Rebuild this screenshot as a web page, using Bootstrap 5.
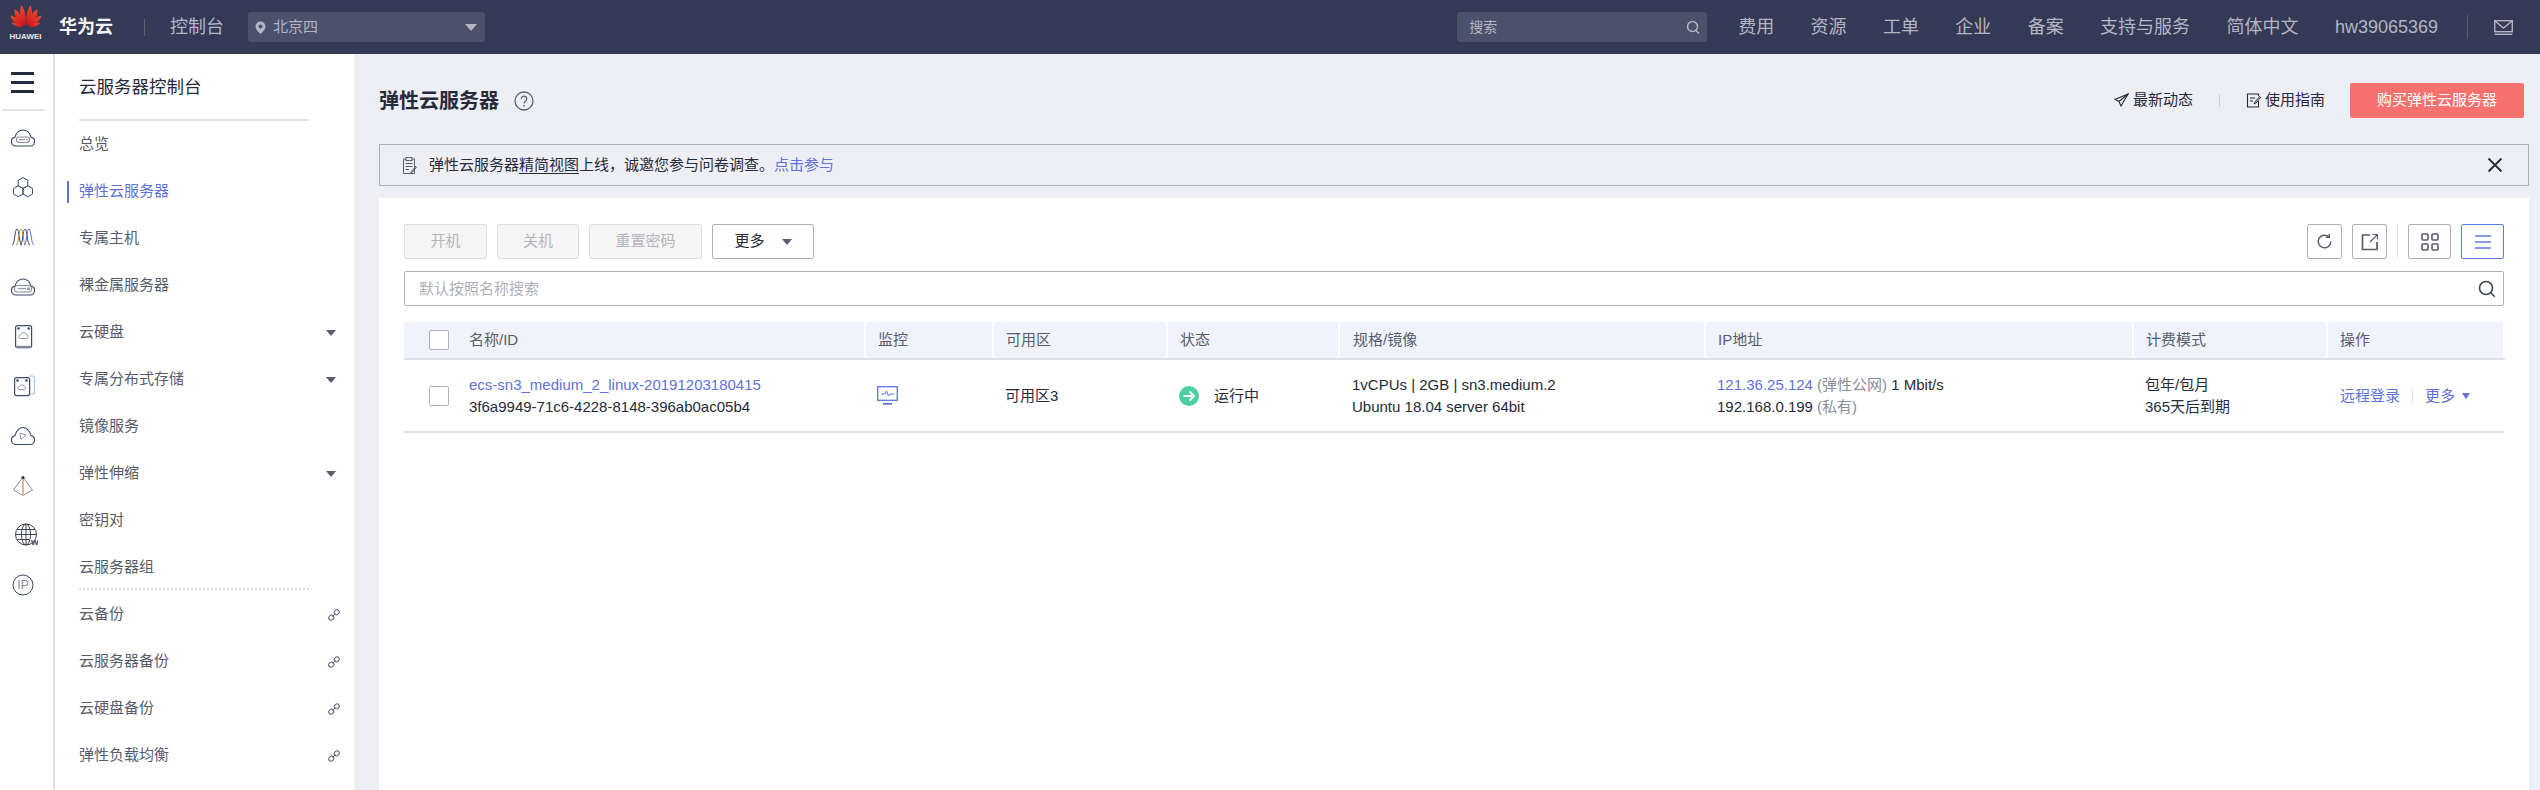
<!DOCTYPE html>
<html lang="zh-CN">
<head>
<meta charset="utf-8">
<title>弹性云服务器</title>
<link href="https://cdn.jsdelivr.net/npm/bootstrap@5.3.0/dist/css/bootstrap.min.css" rel="stylesheet">
<style>
html,body{height:100%;overflow:hidden}
body{font-family:"Liberation Sans","Noto Sans CJK SC",sans-serif;font-size:15px;color:#252b3a;background:#eeeff5}
svg{display:block;flex:none}
a{text-decoration:none}
.hw-top{height:54px;background:#343955;color:#b9bbc7;flex:none}
.hw-logo{width:51px;margin-bottom:9px;flex:none}
.hw-logo-txt{font-size:8px;font-weight:700;line-height:9px;color:#e6e7ec;text-align:center;margin-top:4px}
.hw-brand{font-size:18px;font-weight:700;color:#f4f4f7;margin-left:8px;width:55px}
.hw-vsep{width:1px;height:17px;background:#5d6178}
.hw-vsep-a{margin:0 25px 0 30px}
.hw-console{font-size:18px;width:55px;color:#b4b6c3}
.hw-region{width:237px;height:30px;background:#4b506b;border-radius:3px;margin-left:23px;padding:0 8px 0 7px;color:#b4b6c3}
.hw-region span{margin-left:7px}
.hw-tri{width:0;height:0;border-left:6px solid transparent;border-right:6px solid transparent;border-top:7px solid #b4b6c3}
.hw-search{width:250px;height:30px;background:#4b506b;border-radius:3px;padding:0 7px 0 12px;font-size:14px;color:#b4b6c3;margin-right:31px}
.hw-menu{gap:36.4px;font-size:18px;color:#b4b6c3}
.hw-vsep-b{margin:0 26px 0 29px;background:#555a72;height:24px}
.hw-mail{margin-right:27px}
.hw-wrap{height:736px}
.hw-rail{width:55px;background:#fff;border-right:2px solid #dfe1e6;flex:none}
.hw-burger{height:57px;margin:0 8px 2px 2px;border-bottom:2px solid #e3e4e8;padding:18px 0 0 9px}
.hw-burger i{display:block;width:23px;height:3px;background:#252b3a;margin-bottom:6px}
.hw-railitem{height:49.7px}
.hw-railitem svg{margin-left:10px}
.hw-side{width:299px;background:#fff;flex:none;color:#575d6c}
.hw-side-title{height:67px;margin:0 45px 0 24px;border-bottom:2px solid #e3e4e8;font-size:17.5px;color:#252b3a;line-height:67px}
.hw-side-item{height:47px;padding:0 14px 0 24px;position:relative;color:#575d6c}
.hw-side-item.on{color:#5e72d8}
.hw-side-item.on::before{content:"";position:absolute;left:12px;top:13px;width:2px;height:22px;background:#5e72d8}
.hw-side-item .hw-tri{border-top-color:#575d6c;margin-right:4px;border-left-width:5px;border-right-width:5px;border-top-width:6px}
.hw-dots{margin:-3px 45px 1px 24px;border-top:2px dotted #dfe1e6}
.hw-main{padding:0 11px 0 25px;min-width:0}
.hw-head{height:90px;padding-top:25px}
.hw-h1{font-size:20px;font-weight:700;line-height:44px;margin:0;color:#252b3a}
.hw-help{margin:12px 0 0 15px}
.hw-tool{line-height:42px;font-size:15px;color:#252b3a}
.hw-tool svg{margin-right:4px}
.hw-tool-sep{width:1px;height:13px;background:#c9cfdd;margin:0 26px}
.btn.hw-buy{width:174px;height:35px;margin:0 5px 0 25px;padding:0;background:#f9716e;border:0;border-radius:2px;color:#fff;font-size:15px}
.hw-note{height:42px;border:1px solid #adb0b8;margin-bottom:12px;padding:0 25px 0 22px}
.hw-note span{margin-left:12px}
.hw-note u{text-underline-offset:3px}
.hw-note a,.hw-link{color:#5e72d8}
.hw-panel{background:#fff;padding:26px 25px 0;height:592px}
.hw-bar{height:35px;margin-bottom:12px;gap:10px}
.btn.hw-btn{height:35px;padding:0;font-size:15px;border-radius:2px;border:1px solid #adb0b8;color:#252b3a;background:#fff}
.btn.hw-off,.btn.hw-off:disabled{background:#f5f5f6;border-color:#dfe1e6;color:#b3b5bb;opacity:1}
.hw-w83{width:83px}.hw-w82{width:82px}.hw-w113{width:113px}.hw-w102{width:102px}
.hw-more .hw-tri{border-top-color:#575d6c;border-left-width:5px;border-right-width:5px;border-top-width:6px;margin-left:17px}
.btn.hw-sq{width:35px;display:flex;align-items:center;justify-content:center}
.btn.hw-sq-w{width:43px}
.btn.hw-sq-on{border-color:#5e7ce0}
.hw-bar-sep{width:1px;height:33px;background:#dfe1e6}
.hw-find{height:35px;border:1px solid #adb0b8;border-radius:2px;padding:1px 7px 0 14px;color:#adb0b8;margin-bottom:16px}
.table.hw-table{table-layout:fixed;width:2100px;margin:0;font-size:15px;color:#252b3a}
.hw-table th{height:37px;padding:0 0 0 12px;background:#f0f3fb;border-bottom:2px solid #dfe1e6;border-right:2px solid #fff;font-weight:400;color:#575d6c;vertical-align:middle;--bs-table-bg:#f0f3fb}
.hw-table td{height:73px;padding:0 0 0 12px;border-bottom:2px solid #dfe1e6;vertical-align:middle;line-height:22px;color:#252b3a}
.hw-table .c0{width:55px;padding-left:25px;border-right:0}
.hw-table th.n{width:406px;padding-left:10px}.hw-table td.n{padding-left:10px}
.hw-c-m{width:128px}.hw-c-a{width:174px}.hw-c-s{width:172px}.hw-c-p{width:366px}.hw-c-i{width:428px}.hw-c-b{width:194px}.hw-c-o{width:177px}
.hw-table th.hw-c-p,.hw-table td.hw-c-p,.hw-table td.hw-c-o{padding-left:13px}
.hw-box{display:block;width:20px;height:20px;border:1px solid #adb0b8;border-radius:2px;background:#fff}
.hw-mute{color:#8a8e99}
.hw-state span{margin-left:15px}
.hw-opsep{width:1px;height:14px;background:#dfe1e6;margin:0 12px}
.hw-mini{width:0;height:0;border-left:4px solid transparent;border-right:4px solid transparent;border-top:6px solid #5e72d8;margin-left:7px}
.hw-svgt{font-family:"Liberation Sans",sans-serif}
</style>
</head>
<body>
<header class="hw-top d-flex align-items-center">
  <div class="hw-logo">
    <svg width="32" height="24" viewBox="0 0 34 25" class="mx-auto">
      <defs><linearGradient id="hwg" x1="0" y1="0" x2="0" y2="1"><stop offset="0" stop-color="#f04a2c"/><stop offset="1" stop-color="#c8141c"/></linearGradient></defs>
      <g fill="url(#hwg)">
        <path d="M16 23 C11 17 9 10 12 1 C15 4 18 12 16 23Z"/>
        <path d="M18 23 C23 17 25 10 22 1 C19 4 16 12 18 23Z"/>
        <path d="M15 23 C8 19 4 13 5 5 C9 7 14 14 15 23Z"/>
        <path d="M19 23 C26 19 30 13 29 5 C25 7 20 14 19 23Z"/>
        <path d="M14 23.500 C7 22 2 18 0.500 12 C5 13 11 17 14 23.500Z"/>
        <path d="M20 23.500 C27 22 32 18 33.500 12 C29 13 23 17 20 23.500Z"/>
        <path d="M13.500 24.500 C8 25 4 23 1.500 19.500 C6 19.500 10 21 13.500 24.500Z"/>
        <path d="M20.500 24.500 C26 25 30 23 32.500 19.500 C28 19.500 24 21 20.500 24.500Z"/>
      </g>
    </svg>
    <div class="hw-logo-txt">HUAWEI</div>
  </div>
  <div class="hw-brand">华为云</div>
  <div class="hw-vsep hw-vsep-a"></div>
  <div class="hw-console">控制台</div>
  <div class="hw-region d-flex align-items-center">
    <svg width="11" height="13" viewBox="0 0 11 13"><path fill="#b4b6c3" d="M5.500 0.500a5 5 0 0 1 5 5c0 3-3 5.500-5 7.500-2-2-5-4.500-5-7.500a5 5 0 0 1 5-5z"/><circle cx="5.500" cy="5.500" r="2" fill="#4b506b"/></svg>
    <span>北京四</span>
    <div class="hw-tri ms-auto"></div>
  </div>
  <div class="hw-search d-flex align-items-center justify-content-between ms-auto">
    <span>搜索</span>
    <svg width="14" height="15" viewBox="0 0 14 15" fill="none" stroke="#b4b6c3" stroke-width="1.500"><circle cx="6.500" cy="6.500" r="5"/><path d="M10 10.500l3 3"/></svg>
  </div>
  <div class="hw-menu d-flex align-items-center">
    <span>费用</span><span>资源</span><span>工单</span><span>企业</span><span>备案</span><span>支持与服务</span><span>简体中文</span><span>hw39065369</span>
  </div>
  <div class="hw-vsep hw-vsep-b"></div>
  <svg class="hw-mail" width="19" height="15" viewBox="0 0 19 15" fill="none" stroke="#b4b6c3" stroke-width="1.400"><rect x=".7" y=".7" width="17.600" height="11"/><path d="M1 1l8.500 7L18 1"/><path d="M.7 14.300h17.600"/></svg>
</header>

<div class="hw-wrap d-flex">
  <nav class="hw-rail">
    <div class="hw-burger"><i></i><i></i><i></i></div>
    <div class="hw-railitem d-flex align-items-center"><svg width="26" height="20" viewBox="0 0 26 20" fill="none" stroke="#3c4a6b" stroke-width="1.100"><path d="M6 18a4.500 4.500 0 0 1-1-8.900C6 5 9.300 2 13 2s7 3 8 7.100a4.500 4.500 0 0 1-1 8.900z"/><rect x="6.500" y="9" width="13" height="5.500" rx="2.700" stroke="#8a8e99"/><path d="M9 11.700h6" stroke="#8a8e99"/><circle cx="17" cy="11.700" r=".8" fill="#e0563c" stroke="none"/></svg></div>
    <div class="hw-railitem d-flex align-items-center"><svg width="26" height="21" viewBox="0 0 26 21" fill="none" stroke="#3c4a6b" stroke-width="1"><path d="M13 .5L17.760 3.250V8.750L13 11.500L8.240 8.750V3.250Z"/><path d="M8.240 8.750L13 11.500V17L8.240 19.750L3.480 17V11.500Z"/><path d="M17.760 8.750L22.520 11.500V17L17.760 19.750L13 17V11.500Z"/></svg></div>
    <div class="hw-railitem d-flex align-items-center"><svg width="26" height="20" viewBox="0 0 26 20" fill="none" stroke-width="1"><path stroke="#3c4a6b" d="M2 18C5 18 4.500 2 7 2S9 18 12 18"/><path stroke="#d18a3c" d="M6 18C9 18 8.500 2 11 2S13 18 16 18"/><path stroke="#3c4a6b" d="M10 18C13 18 12.500 2 15 2S17 18 20 18"/><path stroke="#5e72d8" d="M14 18C17 18 16.500 2 19 2S21 18 24 18"/></svg></div>
    <div class="hw-railitem d-flex align-items-center"><svg width="26" height="20" viewBox="0 0 26 20" fill="none" stroke="#3c4a6b" stroke-width="1.100"><path d="M6 18a4.500 4.500 0 0 1-1-8.900C6 5 9.300 2 13 2s7 3 8 7.100a4.500 4.500 0 0 1-1 8.900z"/><rect x="4.500" y="8.500" width="17" height="6.500" rx="3.200" stroke="#8a8e99"/><path d="M8 11.700h8" stroke="#8a8e99"/><circle cx="18.500" cy="11.700" r="1" stroke="#8a8e99"/></svg></div>
    <div class="hw-railitem d-flex align-items-center"><svg width="26" height="24" viewBox="0 0 26 24" fill="none" stroke="#3c4a6b" stroke-width="1.200"><rect x="5.600" y=".6" width="16" height="22" rx="2"/><path d="M10 13.500a2 2 0 0 1 .5-3.800 3.500 3.500 0 0 1 6.500.2 2 2 0 0 1 0 3.600z" stroke="#8a8e99" stroke-width=".9"/><path d="M6 21.800h15.500" stroke="#8a8e99" stroke-width="2"/><circle cx="8.500" cy="3.500" r=".7" fill="#3c4a6b"/><circle cx="18.800" cy="3.500" r=".7" fill="#3c4a6b"/></svg></div>
    <div class="hw-railitem d-flex align-items-center"><svg width="26" height="22" viewBox="0 0 26 22" fill="none" stroke="#3c4a6b" stroke-width="1.200"><path d="M19 1h3.500a2 2 0 0 1 2 2v14a2 2 0 0 1-2 2H20" stroke="#a9c4ea"/><rect x="4.600" y="2.600" width="15" height="18" rx="2"/><path d="M9 14.500a1.500 1.500 0 0 1 .5-3 2.800 2.800 0 0 1 5.200.2 1.500 1.500 0 0 1 0 2.800z" stroke="#8a8e99" stroke-width=".9"/><circle cx="7.500" cy="5.500" r=".7" fill="#3c4a6b"/><circle cx="16.500" cy="5.500" r=".7" fill="#3c4a6b"/></svg></div>
    <div class="hw-railitem d-flex align-items-center"><svg width="26" height="20" viewBox="0 0 26 20" fill="none" stroke="#3c4a6b" stroke-width="1.100"><path d="M6 18.500a4.500 4.500 0 0 1-1-8.900C6 5 9.300 1.500 13 1.500s7 3.500 8 8.100a4.500 4.500 0 0 1-1 8.900z"/><path d="M10 7l6 2-5 4.500z" stroke="#8a8e99" stroke-width=".9"/></svg></div>
    <div class="hw-railitem d-flex align-items-center"><svg width="26" height="22" viewBox="0 0 26 22" fill="none" stroke="#8a8e99" stroke-width="1"><path d="M13 2L3.500 15l9.500 5.500L22.500 15z"/><path d="M13 3v16.500" stroke="#d18a3c" stroke-width="1.200"/><circle cx="13" cy="2.500" r="1.500" fill="#252b3a" stroke="none"/></svg></div>
    <div class="hw-railitem d-flex align-items-center"><svg width="28" height="24" viewBox="0 0 28 24" fill="none" stroke="#3c4151" stroke-width="1"><circle cx="16" cy="11.500" r="10.500"/><ellipse cx="16" cy="11.500" rx="4.500" ry="10.500"/><path d="M16 1v21M5.500 11.500h21M7 6.500h18M7 16.500h12"/><text class="hw-svgt" x="21" y="22" font-size="8" font-weight="700" fill="#3c4151" stroke="none">W</text></svg></div>
    <div class="hw-railitem d-flex align-items-center"><svg width="26" height="22" viewBox="0 0 26 22" fill="none" stroke="#3c4a6b" stroke-width="1"><circle cx="13" cy="11" r="10"/><text class="hw-svgt" x="13" y="15" font-size="12" text-anchor="middle" fill="#8a8e99" stroke="none">IP</text></svg></div>
  </nav>
  <nav class="hw-side">
    <div class="hw-side-title">云服务器控制台</div>
    <div class="hw-side-item d-flex align-items-center justify-content-between">总览</div>
    <div class="hw-side-item on d-flex align-items-center justify-content-between">弹性云服务器</div>
    <div class="hw-side-item d-flex align-items-center justify-content-between">专属主机</div>
    <div class="hw-side-item d-flex align-items-center justify-content-between">裸金属服务器</div>
    <div class="hw-side-item d-flex align-items-center justify-content-between">云硬盘<div class="hw-tri"></div></div>
    <div class="hw-side-item d-flex align-items-center justify-content-between">专属分布式存储<div class="hw-tri"></div></div>
    <div class="hw-side-item d-flex align-items-center justify-content-between">镜像服务</div>
    <div class="hw-side-item d-flex align-items-center justify-content-between">弹性伸缩<div class="hw-tri"></div></div>
    <div class="hw-side-item d-flex align-items-center justify-content-between">密钥对</div>
    <div class="hw-side-item d-flex align-items-center justify-content-between">云服务器组</div>
    <div class="hw-dots"></div>
    <div class="hw-side-item d-flex align-items-center justify-content-between">云备份<svg width="12" height="12" viewBox="0 0 12 12" fill="none" stroke="#575d6c" stroke-width="1"><ellipse cx="3.300" cy="8.700" rx="2.700" ry="2.300" transform="rotate(-40 3.300 8.700)"/><ellipse cx="8.700" cy="3.300" rx="2.700" ry="2.300" transform="rotate(-40 8.700 3.300)"/><path d="M4.500 7.500l3-3"/></svg></div>
    <div class="hw-side-item d-flex align-items-center justify-content-between">云服务器备份<svg width="12" height="12" viewBox="0 0 12 12" fill="none" stroke="#575d6c" stroke-width="1"><ellipse cx="3.300" cy="8.700" rx="2.700" ry="2.300" transform="rotate(-40 3.300 8.700)"/><ellipse cx="8.700" cy="3.300" rx="2.700" ry="2.300" transform="rotate(-40 8.700 3.300)"/><path d="M4.500 7.500l3-3"/></svg></div>
    <div class="hw-side-item d-flex align-items-center justify-content-between">云硬盘备份<svg width="12" height="12" viewBox="0 0 12 12" fill="none" stroke="#575d6c" stroke-width="1"><ellipse cx="3.300" cy="8.700" rx="2.700" ry="2.300" transform="rotate(-40 3.300 8.700)"/><ellipse cx="8.700" cy="3.300" rx="2.700" ry="2.300" transform="rotate(-40 8.700 3.300)"/><path d="M4.500 7.500l3-3"/></svg></div>
    <div class="hw-side-item d-flex align-items-center justify-content-between">弹性负载均衡<svg width="12" height="12" viewBox="0 0 12 12" fill="none" stroke="#575d6c" stroke-width="1"><ellipse cx="3.300" cy="8.700" rx="2.700" ry="2.300" transform="rotate(-40 3.300 8.700)"/><ellipse cx="8.700" cy="3.300" rx="2.700" ry="2.300" transform="rotate(-40 8.700 3.300)"/><path d="M4.500 7.500l3-3"/></svg></div>
  </nav>
  <main class="hw-main flex-grow-1">
    <div class="hw-head d-flex align-items-start">
      <h1 class="hw-h1">弹性云服务器</h1>
      <svg class="hw-help" width="20" height="20" viewBox="0 0 20 20" fill="none" stroke="#575d6c" stroke-width="1.300"><circle cx="10" cy="10" r="9"/><path d="M7.300 7.800a2.700 2.700 0 1 1 4.300 2.200c-1 .7-1.600 1.200-1.600 2.400"/><circle cx="10" cy="14.800" r=".9" fill="#575d6c" stroke="none"/></svg>
      <div class="ms-auto d-flex align-items-center">
        <div class="hw-tool d-flex align-items-center"><svg width="15" height="14" viewBox="0 0 15 14" fill="none" stroke="#252b3a" stroke-width="1.100"><path d="M14 1L1 6.500l4 2L7 13z"/><path d="M14 1L5 8.500"/></svg>最新动态</div>
        <div class="hw-tool-sep"></div>
        <div class="hw-tool d-flex align-items-center"><svg width="15" height="15" viewBox="0 0 15 15" fill="none" stroke="#252b3a" stroke-width="1.100"><path d="M12.500 8v6h-11V1h11v2"/><path d="M4 5h5M4 8h3"/><path d="M14 3l-5 6-1 2 2-1 5-6" stroke-width="1"/></svg>使用指南</div>
        <button class="btn hw-buy" type="button">购买弹性云服务器</button>
      </div>
    </div>
    <div class="hw-note d-flex align-items-center">
      <svg width="15" height="17" viewBox="0 0 15 17" fill="none" stroke="#575d6c" stroke-width="1"><path d="M4 2H1.500v14.500h11V2H10"/><rect x="4" y=".6" width="6" height="3"/><path d="M3.500 6.500h7M3.500 9.500h7M3.500 12.500h3.500"/><path d="M14 9l-4.500 5.500-.7 1.500 1.500-.7L14.500 10"/></svg>
      <span>弹性云服务器<u>精简视图</u>上线，诚邀您参与问卷调查。<a href="#">点击参与</a></span>
      <svg class="ms-auto" width="16" height="16" viewBox="0 0 16 16" fill="none" stroke="#252b3a" stroke-width="1.800"><path d="M1.500 1.500l13 13M14.500 1.500l-13 13"/></svg>
    </div>
    <section class="hw-panel">
      <div class="hw-bar d-flex align-items-center">
        <button class="btn hw-btn hw-off hw-w83" disabled type="button">开机</button>
        <button class="btn hw-btn hw-off hw-w82" disabled type="button">关机</button>
        <button class="btn hw-btn hw-off hw-w113" disabled type="button">重置密码</button>
        <button class="btn hw-btn hw-more hw-w102 d-flex align-items-center justify-content-center" type="button">更多<div class="hw-tri"></div></button>
        <button class="btn hw-btn hw-sq ms-auto" type="button"><svg width="17" height="17" viewBox="0 0 17 17" fill="none" stroke="#575d6c" stroke-width="1.500"><path d="M14.800 8.500a6.300 6.300 0 1 1-2-4.600"/><path d="M13.300 1v3.400H9.900" stroke-width="1.400"/></svg></button>
        <button class="btn hw-btn hw-sq" type="button"><svg width="18" height="18" viewBox="0 0 18 18" fill="none" stroke="#575d6c" stroke-width="1.700"><path d="M9 2H1.500v14.500H16V9"/><path d="M9 9l7-7M11.500 1.500h5v5" stroke-width="1.200"/></svg></button>
        <div class="hw-bar-sep"></div>
        <button class="btn hw-btn hw-sq hw-sq-w" type="button"><svg width="18" height="18" viewBox="0 0 18 18" fill="none" stroke="#575d6c" stroke-width="1.600"><rect x="1" y="1" width="6" height="6" rx="1"/><rect x="11" y="1" width="6" height="6" rx="1"/><rect x="1" y="11" width="6" height="6" rx="1"/><rect x="11" y="11" width="6" height="6" rx="1"/></svg></button>
        <button class="btn hw-btn hw-sq hw-sq-w hw-sq-on" type="button"><svg width="16" height="14" viewBox="0 0 16 14" fill="none" stroke="#5e7ce0" stroke-width="1.600"><path d="M0 1h16M0 7h16M0 13h16"/></svg></button>
      </div>
      <div class="hw-find d-flex align-items-center justify-content-between">
        <span>默认按照名称搜索</span>
        <svg width="18" height="18" viewBox="0 0 18 18" fill="none" stroke="#3f4555" stroke-width="1.600"><circle cx="8" cy="8" r="6.500"/><path d="M12.800 12.800l4 4"/></svg>
      </div>
      <table class="table hw-table">
        <thead>
          <tr>
            <th class="c0"><span class="hw-box"></span></th>
            <th class="n">名称/ID</th>
            <th class="hw-c-m">监控</th>
            <th class="hw-c-a">可用区</th>
            <th class="hw-c-s">状态</th>
            <th class="hw-c-p">规格/镜像</th>
            <th class="hw-c-i">IP地址</th>
            <th class="hw-c-b">计费模式</th>
            <th class="hw-c-o">操作</th>
          </tr>
        </thead>
        <tbody>
          <tr>
            <td class="c0"><span class="hw-box"></span></td>
            <td class="n"><a class="hw-link" href="#">ecs-sn3_medium_2_linux-20191203180415</a><br>3f6a9949-71c6-4228-8148-396ab0ac05b4</td>
            <td><svg width="21" height="19" viewBox="0 0 21 19" fill="none" stroke="#5e72d8" stroke-width="1.300"><rect x=".7" y=".7" width="19.600" height="13.600"/><path d="M4 8h4l1.500-3 2 5 1.500-2h4" stroke-width="1"/><path d="M6 17.800h9" stroke-width="1.800"/></svg></td>
            <td>可用区3</td>
            <td><div class="hw-state d-flex align-items-center"><svg width="20" height="20" viewBox="0 0 20 20"><circle cx="10" cy="10" r="10" fill="#4bcfa2"/><path d="M4.500 10h10M10.500 5.500l4.500 4.500-4.500 4.500" fill="none" stroke="#fff" stroke-width="2"/></svg><span>运行中</span></div></td>
            <td class="hw-c-p">1vCPUs | 2GB | sn3.medium.2<br>Ubuntu 18.04 server 64bit</td>
            <td><a class="hw-link" href="#">121.36.25.124</a> <span class="hw-mute">(弹性公网)</span> 1 Mbit/s<br>192.168.0.199 <span class="hw-mute">(私有)</span></td>
            <td>包年/包月<br>365天后到期</td>
            <td class="hw-c-o"><div class="d-flex align-items-center"><a class="hw-link" href="#">远程登录</a><div class="hw-opsep"></div><a class="hw-link" href="#">更多</a><div class="hw-mini"></div></div></td>
          </tr>
        </tbody>
      </table>
    </section>
  </main>
</div>
<script src="https://cdn.jsdelivr.net/npm/bootstrap@5.3.0/dist/js/bootstrap.bundle.min.js"></script>
</body>
</html>
